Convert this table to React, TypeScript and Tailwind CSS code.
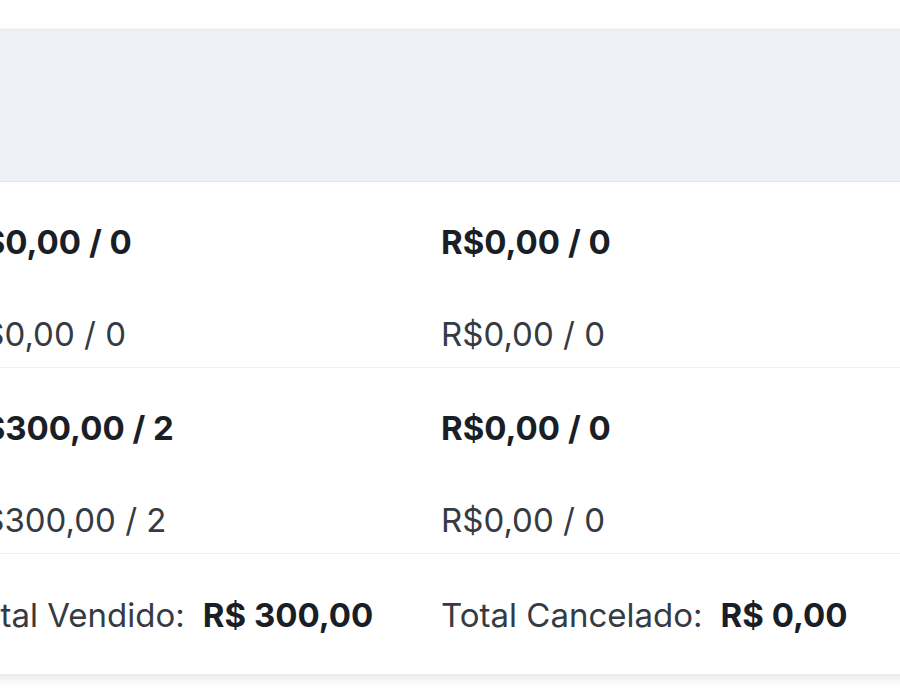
import React from "react";

const rows = [
  { a: ["R$0,00 / 0", "R$0,00 / 0"], b: ["R$0,00 / 0", "R$0,00 / 0"] },
  { a: ["R$300,00 / 2", "R$300,00 / 2"], b: ["R$0,00 / 0", "R$0,00 / 0"] },
];

function Cell({ top, bottom }: { top: string; bottom: string }) {
  return (
    <div className="pl-[48px] pt-[40px] pb-[13px] flex flex-col gap-[52px]">
      <div className="text-[33px] leading-[40px] font-bold text-[#1a1e26] whitespace-nowrap">{top}</div>
      <div className="text-[33px] leading-[40px] text-[#363b43] whitespace-nowrap">{bottom}</div>
    </div>
  );
}

export default function App() {
  return (
    <div className="w-[900px] h-[700px] overflow-hidden bg-white font-['Inter',sans-serif]">
      <div className="pt-[29px]">
        <div className="-ml-[86px] w-[1200px] bg-white shadow-[0_4px_10px_rgba(0,0,0,0.10)]">
          <div className="h-[153px] bg-[#edf1f5] border-t border-b border-[#e4e8ec]" />
          {rows.map((r, i) => (
            <div key={i} className="grid grid-cols-[479px_487px_1fr] border-b border-[#f0f1f3]">
              <Cell top={r.a[0]} bottom={r.a[1]} />
              <Cell top={r.b[0]} bottom={r.b[1]} />
              <div />
            </div>
          ))}
          <div className="h-[120px] pt-[3px] flex items-center pl-[48px] text-[33px] whitespace-nowrap">
            <div className="w-[479px] flex items-center">
              <span className="text-[#363b43]">Total Vendido:</span>
              <span className="ml-[18px] font-bold text-[#1a1e26]">R$ 300,00</span>
            </div>
            <div className="flex items-center">
              <span className="text-[#363b43]">Total Cancelado:</span>
              <span className="ml-[18px] font-bold text-[#1a1e26]">R$ 0,00</span>
            </div>
          </div>
        </div>
      </div>
    </div>
  );
}
